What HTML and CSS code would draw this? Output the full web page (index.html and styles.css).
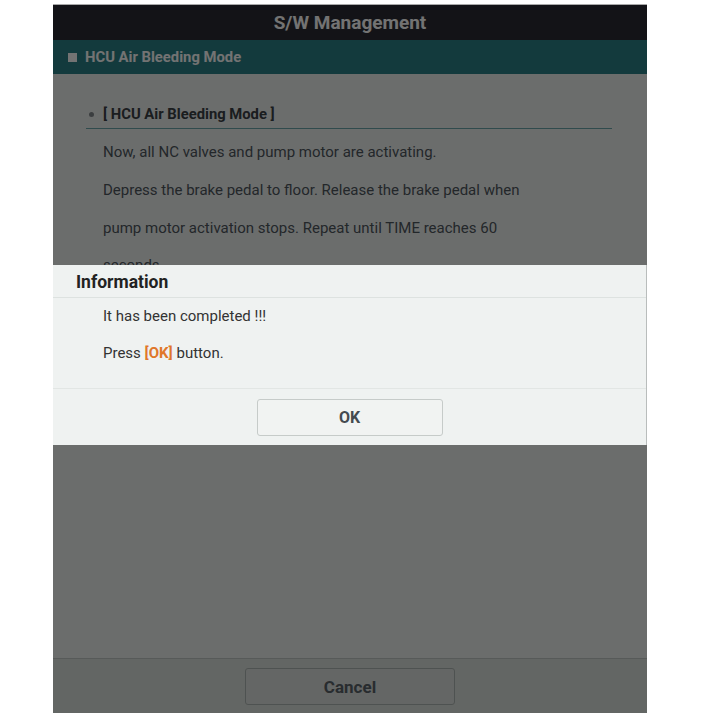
FILE: index.html
```html
<!DOCTYPE html>
<html>
<head>
    <title>S/W Management</title>
    <link rel="stylesheet" href="styles.css">
</head>
<body>
    <div class="screen">
        <div class="header">S/W Management</div>
        <div class="subheader"><span class="square"></span>HCU Air Bleeding Mode</div>
        <div class="content">
            <div class="section-title"><span class="dot"></span>[ HCU Air Bleeding Mode ]</div>
            <p class="text">Now, all NC valves and pump motor are activating.</p>
            <p class="text">Depress the brake pedal to floor. Release the brake pedal when<br>pump motor activation stops. Repeat until TIME reaches 60<br>seconds.</p>
        </div>
        <div class="footer">
            <button class="btn btn-cancel">Cancel</button>
        </div>

        <div class="overlay"></div>

        <div class="dialog">
            <div class="dialog-title">Information</div>
            <div class="dialog-body">
                <p>It has been completed !!!</p>
                <p>Press <span class="hl">[OK]</span> button.</p>
            </div>
            <div class="dialog-footer">
                <button class="btn btn-ok">OK</button>
            </div>
        </div>
    </div>
</body>
</html>
```

FILE: styles.css
```css
body {
    margin: 0;
    background: #fff;
    font-family: Roboto, "Liberation Sans", Arial, sans-serif;
}
.screen {
    position: relative;
    width: 594px;
    height: 708px;
    margin: 4px 0 0 53px;
    border-top: 1px solid #a9a9a9;
    display: flex;
    flex-direction: column;
    background: #eef2f0;
    overflow: hidden;
}
.header {
    height: 35px;
    line-height: 36px;
    background: #2a2c33;
    color: #fff;
    text-align: center;
    font-size: 19px;
    font-weight: bold;
}
.subheader {
    height: 34px;
    display: flex;
    align-items: center;
    padding-left: 15px;
    background: #2c8188;
    color: #fff;
    font-size: 14.8px;
    font-weight: bold;
}
.square {
    width: 9px;
    height: 9px;
    background: #fff;
    margin-right: 8px;
}
.content {
    flex: 1;
    padding: 30px 35px 0 33px;
}
.section-title {
    display: flex;
    align-items: center;
    height: 20px;
    line-height: 20px;
    padding-bottom: 4px;
    border-bottom: 1px solid #6aa7ab;
    color: #3a4046;
    font-size: 14.8px;
    font-weight: bold;
}
.dot {
    width: 5px;
    height: 5px;
    border-radius: 50%;
    background: #848a8e;
    margin: 0 9px 0 3px;
}
.text {
    margin: 0;
    padding-left: 17px;
    line-height: 37.8px;
    font-size: 15px;
    color: #4f575e;
}
.text:first-of-type {
    margin-top: 5px;
}
.footer {
    height: 55px;
    border-top: 1px solid #c2c8c6;
    background: #dbe2de;
    display: flex;
    justify-content: center;
    padding-top: 9px;
    box-sizing: border-box;
}
.btn {
    font-family: inherit;
    font-weight: bold;
    border-radius: 3px;
    cursor: pointer;
}
.btn-cancel {
    width: 210px;
    height: 37px;
    background: #dde3e0;
    border: 1px solid #aeb6b4;
    color: #5a6269;
    font-size: 17px;
}
.overlay {
    position: absolute;
    top: 0;
    left: 0;
    right: 0;
    bottom: 0;
    background: rgba(0, 0, 0, 0.55);
}
.dialog {
    position: absolute;
    top: 260px;
    left: 0;
    right: 0;
    background: #eff2f1;
    border-right: 1px solid #b9bdbc;
}
.dialog-title {
    height: 32px;
    line-height: 34px;
    padding-left: 23px;
    border-bottom: 1px solid #dde2e0;
    font-size: 17.5px;
    font-weight: bold;
    color: #222;
}
.dialog-body {
    padding: 0 0 16px 50px;
    border-bottom: 1px solid #e2e6e4;
}
.dialog-body p {
    margin: 0;
    line-height: 37px;
    font-size: 15px;
    color: #333;
}
.hl {
    color: #e0772a;
    font-weight: bold;
}
.dialog-footer {
    height: 56px;
    display: flex;
    justify-content: center;
    padding-top: 10px;
    box-sizing: border-box;
}
.btn-ok {
    width: 186px;
    height: 37px;
    background: #f1f3f2;
    border: 1px solid #c6cbc9;
    color: #444a4f;
    font-size: 16px;
}
```
